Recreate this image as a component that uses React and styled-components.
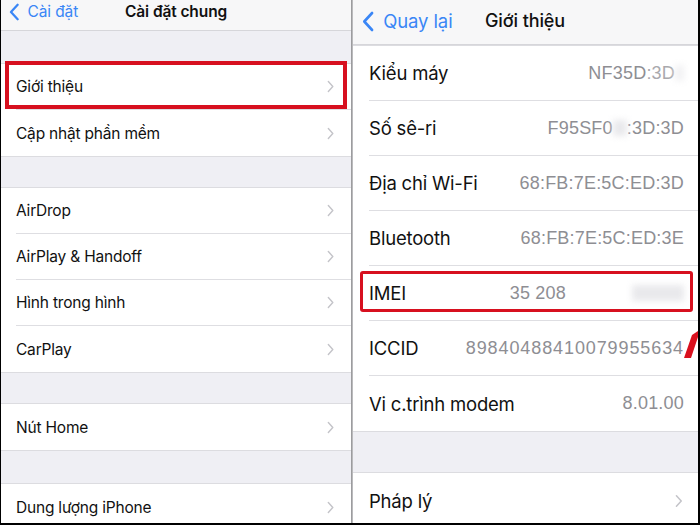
import React from "react";
import styled, { createGlobalStyle } from "styled-components";

const GlobalStyle = createGlobalStyle`
  html, body {
    margin: 0;
    padding: 0;
    background: #000;
  }
  body {
    font-family: Inter, "Noto Sans", "Liberation Sans", sans-serif;
    -webkit-font-smoothing: antialiased;
  }
`;

const generalGroups = [
  { gap: "32px", rows: ["Giới thiệu", "Cập nhật phần mềm"] },
  { gap: "30px", rows: ["AirDrop", "AirPlay & Handoff", "Hình trong hình", "CarPlay"] },
  { gap: "30px", rows: ["Nút Home"] },
  { gap: "32px", rows: ["Dung lượng iPhone"] },
];

function Chevron({ size = 13 }) {
  return (
    <svg width={size * 0.55} height={size} viewBox="0 0 8 14">
      <path d="M1.5 1.5 L6.5 7 L1.5 12.5" fill="none" stroke="#c4c4c9" strokeWidth="1.6" strokeLinecap="round" strokeLinejoin="round" />
    </svg>
  );
}

function BackChevron({ h }) {
  return (
    <svg width={h * 0.58} height={h} viewBox="0 0 12 21">
      <path d="M10 2 L2.2 10.5 L10 19" fill="none" stroke="#3a86f6" strokeWidth="2.6" strokeLinecap="round" strokeLinejoin="round" />
    </svg>
  );
}

export default function App() {
  return (
    <>
      <GlobalStyle />
      <Screen>
        <Panel $width="350px">
          <NavBar $height="31px">
            <Back $size="15.5px" $shift="-7px">
              <BackChevron h={18} />
              Cài đặt
            </Back>
            <Title $size="15.5px" $weight={600} $left="124px" $shift="-13px">Cài đặt chung</Title>
          </NavBar>
          {generalGroups.map((group, gi) => (
            <React.Fragment key={gi}>
              <Spacer $h={group.gap} />
              <Group>
                {group.rows.map((label, ri) => (
                  <Row key={label} $h="46px" $inset="15px">
                    <RowInner $last={ri === group.rows.length - 1} $pr="17px">
                      <Label $size="15.5px">{label}</Label>
                      <Chevron />
                    </RowInner>
                    {label === "Giới thiệu" && <Highlight $top="-3px" $bottom="1px" $left="4px" $right="4px" $w="4px" />}
                  </Row>
                ))}
              </Group>
            </React.Fragment>
          ))}
        </Panel>
        <Divider />
        <Panel $width="345px">
          <NavBar $height="45px">
            <Back $size="18.5px" $pl="9px" $gap="9px" $shift="-2px">
              <BackChevron h={21} />
              Quay lại
            </Back>
            <Title $size="18px" $weight={500} $left="132px" $shift="-12px">Giới thiệu</Title>
          </NavBar>
          <Group>
            <InfoRow label="Kiểu máy">
              NF35D<Faint>:3D</Faint>
              <Smudge $w="9px" $tone="#f1f1f3">&nbsp;</Smudge>
            </InfoRow>
            <InfoRow label="Số sê-ri">
              F95SF0<Smudge>&nbsp;</Smudge>:3D:3D
            </InfoRow>
            <InfoRow label="Địa chỉ Wi-Fi">68:FB:7E:5C:ED:3D</InfoRow>
            <InfoRow label="Bluetooth">68:FB:7E:5C:ED:3E</InfoRow>
            <InfoRow label="IMEI" highlight>
              <Imei>35 208</Imei>
              <Smudge $w="52px">&nbsp;</Smudge>
            </InfoRow>
            <InfoRow label="ICCID" spacing="0.9px">89840488410079955634</InfoRow>
            <InfoRow label="Vi c.trình modem" last>8.01.00</InfoRow>
          </Group>
          <Spacer $h="40px" />
          <Group>
            <Row $h="55px" $inset="16px">
              <RowInner $last $pr="15px">
                <Label $size="18.5px">Pháp lý</Label>
                <Chevron size={14} />
              </RowInner>
            </Row>
          </Group>
          <Arrow width="14" height="28" viewBox="0 0 14 28">
            <path d="M0 27 L8 4 L14 0 L14 6 L7 27 Z" fill="#d9101e" />
          </Arrow>
        </Panel>
      </Screen>
    </>
  );
}

function InfoRow({ label, children, last, highlight, spacing }) {
  return (
    <Row $h="55px" $inset="16px">
      <RowInner $last={last} $pr="14px">
        <Label $size="18.5px">{label}</Label>
        <Value $spacing={spacing}>{children}</Value>
      </RowInner>
      {highlight && <Highlight $top="5px" $bottom="9px" $left="7px" $right="5px" $w="3px" $radius="3px" />}
    </Row>
  );
}

const Screen = styled.div`
  display: flex;
  width: 700px;
  height: 525px;
  box-sizing: border-box;
  padding: 0 2px 2px 1px;
  background: #000;
  overflow: hidden;
`;

const Panel = styled.div`
  position: relative;
  display: flex;
  flex-direction: column;
  width: ${(p) => p.$width};
  flex-shrink: 0;
  background: #efeff4;
  overflow: hidden;
`;

const Divider = styled.div`
  width: 2px;
  flex-shrink: 0;
  background: linear-gradient(90deg, #8d8d8f, #c9c9cc);
`;

const NavBar = styled.div`
  position: relative;
  display: flex;
  align-items: center;
  height: ${(p) => p.$height};
  flex-shrink: 0;
  background: #f7f7f8;
  border-bottom: 1px solid #d6d6da;
  box-sizing: border-box;
`;

const Back = styled.div`
  display: flex;
  align-items: center;
  gap: ${(p) => p.$gap || "8px"};
  padding-left: ${(p) => p.$pl || "8px"};
  margin-top: ${(p) => p.$shift};
  font-size: ${(p) => p.$size};
  color: #3a86f6;
  letter-spacing: -0.1px;
`;

const Title = styled.div`
  position: absolute;
  left: ${(p) => p.$left};
  top: 50%;
  transform: translateY(${(p) => p.$shift});
  font-size: ${(p) => p.$size};
  font-weight: ${(p) => p.$weight};
  color: #111;
  letter-spacing: -0.1px;
`;

const Spacer = styled.div`
  height: ${(p) => p.$h};
  flex-shrink: 0;
`;

const Group = styled.div`
  display: flex;
  flex-direction: column;
  background: #fff;
  border-top: 1px solid #dcdce0;
  border-bottom: 1px solid #dcdce0;
  flex-shrink: 0;
`;

const Row = styled.div`
  position: relative;
  height: ${(p) => p.$h};
  padding-left: ${(p) => p.$inset};
  box-sizing: border-box;
  display: flex;
`;

const RowInner = styled.div`
  flex: 1;
  display: flex;
  align-items: center;
  justify-content: space-between;
  padding-right: ${(p) => p.$pr};
  border-bottom: ${(p) => (p.$last ? "none" : "1px solid #dedee2")};
`;

const Label = styled.span`
  font-size: ${(p) => p.$size};
  color: #111;
  letter-spacing: -0.2px;
`;

const Value = styled.span`
  display: flex;
  align-items: center;
  font-family: "Liberation Sans", Arial, sans-serif;
  font-size: 18px;
  color: #8e8e93;
  letter-spacing: ${(p) => p.$spacing || "0.2px"};
`;

const Faint = styled.span`
  color: #a9a9ad;
`;

const Smudge = styled.span`
  display: inline-block;
  width: ${(p) => p.$w || "14px"};
  height: 16px;
  background: ${(p) => p.$tone || "#e9e9ec"};
  filter: blur(3px);
`;

const Imei = styled.span`
  margin-right: 66px;
`;

const Highlight = styled.div`
  position: absolute;
  top: ${(p) => p.$top};
  bottom: ${(p) => p.$bottom};
  left: ${(p) => p.$left};
  right: ${(p) => p.$right};
  border: ${(p) => p.$w} solid #d7101f;
  border-radius: ${(p) => p.$radius || "0"};
  pointer-events: none;
`;

const Arrow = styled.svg`
  position: absolute;
  right: 0;
  top: 331px;
`;
